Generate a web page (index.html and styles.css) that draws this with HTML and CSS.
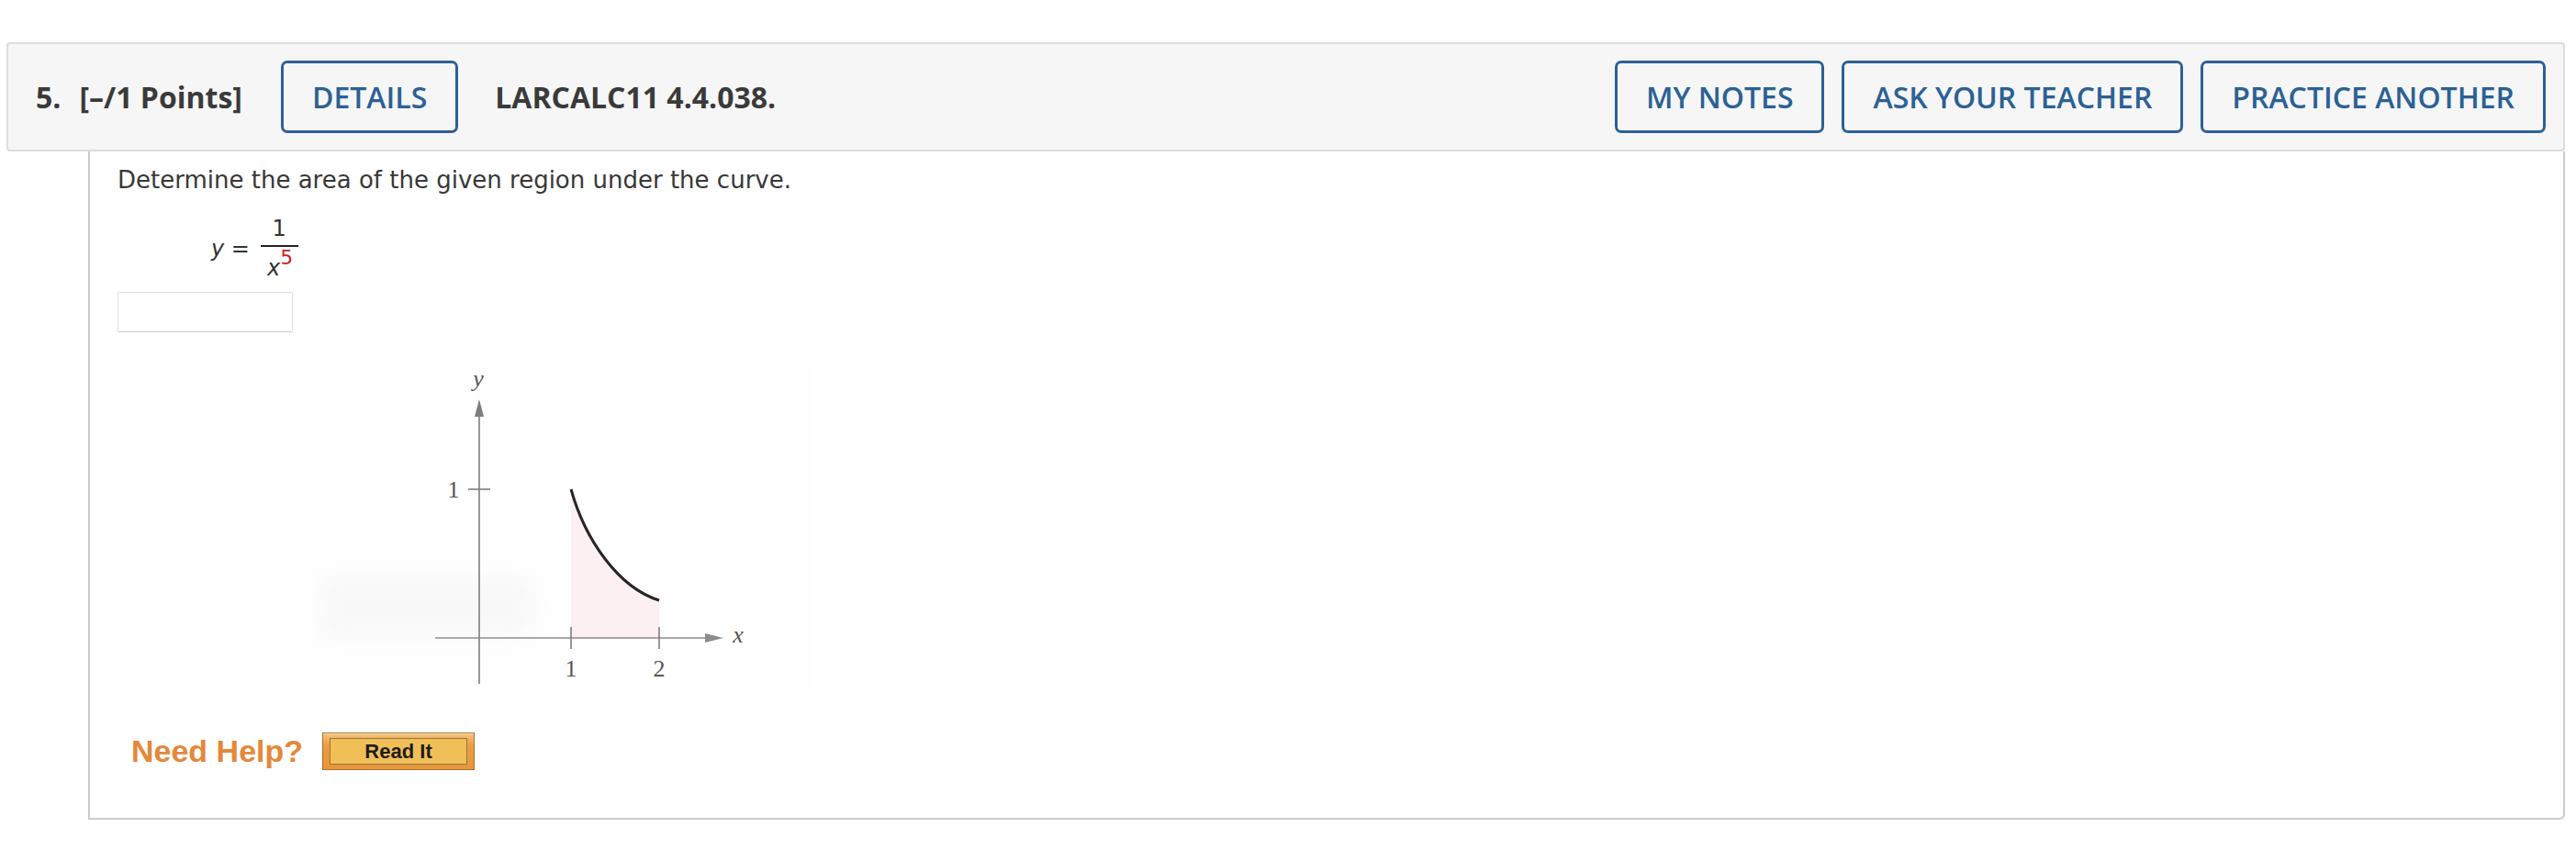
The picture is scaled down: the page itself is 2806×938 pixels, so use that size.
FILE: index.html
```html
<!DOCTYPE html>
<html lang="en">
<head>
    <meta charset="UTF-8">
    <title>LARCALC11 4.4.038.</title>
    <link rel="stylesheet" href="styles.css">
</head>
<body>

    <div class="page">
        <div class="qhead">
            <span class="qnum">5.</span>
            <span class="qpts">[&ndash;/1 Points]</span>
            <button class="btn">DETAILS</button>
            <span class="qid">LARCALC11 4.4.038.</span>
            <div class="qactions">
                <button class="btn">MY NOTES</button>
                <button class="btn">ASK YOUR TEACHER</button>
                <button class="btn">PRACTICE ANOTHER</button>
            </div>
        </div>

        <div class="qbody">
            <p class="prompt">Determine the area of the given region under the curve.</p>

            <div class="eq">
                <span class="eq-lhs"><i>y</i> = </span>
                <span class="frac">
                    <span class="num">1</span>
                    <span class="bar"></span>
                    <span class="den"><i>x</i><sup>5</sup></span>
                </span>
            </div>

            <input class="answer" type="text">

            <svg class="graph" width="546" height="358" viewBox="0 0 546 358">
                <defs>
                    <filter id="soft" x="-20%" y="-50%" width="140%" height="200%">
                        <feGaussianBlur stdDeviation="12"/>
                    </filter>
                </defs>
                <!-- faint scan background -->
                <rect x="0" y="0" width="546" height="358" fill="#fefefe"/>
                <rect x="10" y="236" width="230" height="64" fill="#f3f3f3" opacity="0.5" filter="url(#soft)"/>
                <!-- shaded region -->
                <path d="M282,301 L282,139 C297,193 333,246 378,260 L378,301 Z" fill="#fcf0f3"/>
                <!-- axes -->
                <line x1="182" y1="56" x2="182" y2="351" stroke="#7d7d7d" stroke-width="1.6"/>
                <polygon points="182,41 177,60 187,60" fill="#7d7d7d"/>
                <line x1="134" y1="301" x2="432" y2="301" stroke="#8c8c8c" stroke-width="1.6"/>
                <polygon points="448,301 428,296 428,306" fill="#8c8c8c"/>
                <!-- ticks -->
                <line x1="170" y1="139" x2="194" y2="139" stroke="#7d7d7d" stroke-width="1.6"/>
                <line x1="282" y1="289" x2="282" y2="313" stroke="#7d7d7d" stroke-width="1.6"/>
                <line x1="378" y1="289" x2="378" y2="313" stroke="#7d7d7d" stroke-width="1.6"/>
                <!-- curve -->
                <path d="M282,139 C297,193 333,246 378,260" fill="none" stroke="#262626" stroke-width="3"/>
                <!-- labels -->
                <text class="lbl" x="181" y="27" font-style="italic">y</text>
                <text class="lbl" x="154" y="148">1</text>
                <text class="lbl" x="282" y="343">1</text>
                <text class="lbl" x="378" y="343">2</text>
                <text class="lbl" x="464" y="306" font-style="italic">x</text>
            </svg>

            <div class="help">
                <span class="help-label">Need Help?</span>
                <span class="readit"><span>Read It</span></span>
            </div>
        </div>
    </div>

</body>
</html>
```

FILE: styles.css
```css
body {
    margin: 0;
    background: #fff;
    font-family: "DejaVu Sans", Verdana, sans-serif;
    color: #333;
}
.page {
    padding: 46px 12px 0 7px;
}

/* barra superior de la pregunta */
.qhead {
    display: flex;
    align-items: center;
    height: 119px;
    box-sizing: border-box;
    padding: 0 19px 0 30px;
    background: #f6f6f6;
    border: 2px solid #dddddd;
    border-radius: 4px;
    font-family: "Open Sans", sans-serif;
    font-size: 32px;
    font-weight: 700;
    color: #3a3a3a;
}
.qnum {
    margin-right: 20px;
}
.qpts {
    margin-right: 42px;
}
.qid {
    margin-left: 40px;
}
.qactions {
    display: flex;
    gap: 19px;
    margin-left: auto;
}
.btn {
    height: 79px;
    box-sizing: border-box;
    padding: 0 31px;
    background: transparent;
    border: 3px solid #2b6195;
    border-radius: 7px;
    font-family: "Open Sans", sans-serif;
    font-size: 32px;
    font-weight: 600;
    color: #2b6195;
    cursor: pointer;
}

/* cuerpo de la pregunta */
.qbody {
    margin-left: 89px;
    padding: 16px 30px 52px 30px;
    border: 2px solid #cbcbcb;
    border-top: none;
    border-radius: 0 0 6px 0;
}
.prompt {
    margin: 0;
    font-size: 26px;
    line-height: 30px;
    color: #383838;
}
.eq {
    display: flex;
    align-items: center;
    margin: 26px 0 0 102px;
    font-size: 24px;
    line-height: 24px;
    color: #333;
}
.eq-lhs {
    white-space: pre;
    margin-right: 4px;
}
.frac {
    display: inline-flex;
    flex-direction: column;
    align-items: center;
}
.num {
    padding-bottom: 6px;
}
.bar {
    align-self: stretch;
    width: 41px;
    height: 2px;
    background: #222;
}
.den {
    padding-top: 11px;
    padding-left: 2px;
}
.den sup {
    font-size: 22px;
    line-height: 0;
    vertical-align: 12px;
    color: #cc1f1f;
}
.answer {
    display: block;
    margin-top: 14px;
    width: 191px;
    height: 44px;
    box-sizing: border-box;
    border: 1px solid #e0e0e0;
    border-bottom-color: #c9c9c9;
    border-radius: 2px;
}
.graph {
    display: block;
    margin: 32px 0 0 212px;
}
.lbl {
    font-family: "Liberation Serif", serif;
    font-size: 26px;
    fill: #555;
    text-anchor: middle;
}

/* ayuda */
.help {
    display: flex;
    align-items: center;
    gap: 21px;
    margin-top: 46px;
    padding-left: 15px;
}
.help-label {
    font-family: "Liberation Sans", Arial, sans-serif;
    font-size: 34px;
    font-weight: 700;
    line-height: 41px;
    color: #e4883a;
}
.readit {
    display: inline-block;
    width: 166px;
    height: 41px;
    box-sizing: border-box;
    padding: 5px 7px;
    border: 1px solid #a3722f;
    background: linear-gradient(#f6c27e, #eb9d41 35%, #e8963a);
    box-shadow: inset 0 1px 0 #fbe2b6;
}
.readit span {
    display: block;
    height: 29px;
    box-sizing: border-box;
    border: 1px solid #93763f;
    background: #f1bf58;
    font-family: "Liberation Sans", Arial, sans-serif;
    font-size: 22px;
    font-weight: 700;
    line-height: 27px;
    text-align: center;
    color: #1c1c1c;
}
```
